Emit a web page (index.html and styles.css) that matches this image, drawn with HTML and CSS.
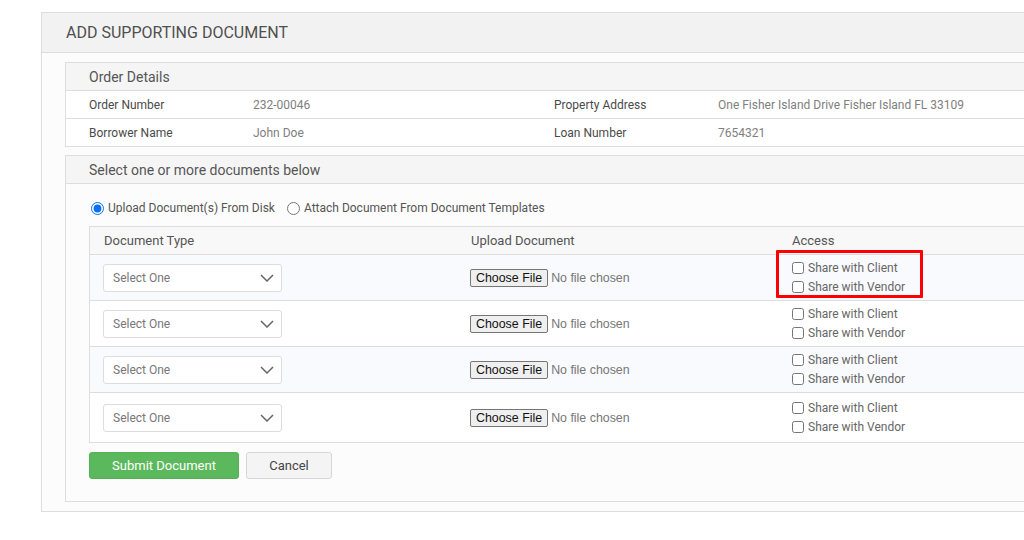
FILE: index.html
```html
<!DOCTYPE html>
<html lang="en">
<head>
  <meta charset="UTF-8" />
  <meta name="viewport" content="width=device-width, initial-scale=1.0"/>
  <title>Add Supporting Document</title>
  <link rel="stylesheet" href="styles.css">
</head>
<body>

  <div class="panel">
    <div class="panel-head">ADD SUPPORTING DOCUMENT</div>

    <div class="panel-body">
      <!-- Order Details -->
      <div class="box">
        <div class="box-head">Order Details</div>
        <div class="detail-row">
          <span class="label">Order Number</span>
          <span class="value">232-00046</span>
          <span class="label">Property Address</span>
          <span class="value">One Fisher Island Drive Fisher Island FL 33109</span>
        </div>
        <div class="detail-row">
          <span class="label">Borrower Name</span>
          <span class="value">John Doe</span>
          <span class="label">Loan Number</span>
          <span class="value">7654321</span>
        </div>
      </div>

      <!-- Documents -->
      <div class="box">
        <div class="box-head">Select one or more documents below</div>
        <div class="box-content">
          <div class="source">
            <label><input type="radio" name="source" checked> Upload Document(s) From Disk</label>
            <label><input type="radio" name="source"> Attach Document From Document Templates</label>
          </div>

          <div class="doc-table">
            <div class="doc-row doc-head">
              <div class="cell">Document Type</div>
              <div class="cell">Upload Document</div>
              <div class="cell">Access</div>
            </div>

            <div class="doc-row">
              <div class="cell"><select class="doc-select"><option>Select One</option></select></div>
              <div class="cell"><input type="file" class="file"></div>
              <div class="cell access">
                <label><input type="checkbox"> Share with Client</label>
                <label><input type="checkbox"> Share with Vendor</label>
                <div class="highlight"></div>
              </div>
            </div>

            <div class="doc-row">
              <div class="cell"><select class="doc-select"><option>Select One</option></select></div>
              <div class="cell"><input type="file" class="file"></div>
              <div class="cell access">
                <label><input type="checkbox"> Share with Client</label>
                <label><input type="checkbox"> Share with Vendor</label>
              </div>
            </div>

            <div class="doc-row">
              <div class="cell"><select class="doc-select"><option>Select One</option></select></div>
              <div class="cell"><input type="file" class="file"></div>
              <div class="cell access">
                <label><input type="checkbox"> Share with Client</label>
                <label><input type="checkbox"> Share with Vendor</label>
              </div>
            </div>

            <div class="doc-row last">
              <div class="cell"><select class="doc-select"><option>Select One</option></select></div>
              <div class="cell"><input type="file" class="file"></div>
              <div class="cell access">
                <label><input type="checkbox"> Share with Client</label>
                <label><input type="checkbox"> Share with Vendor</label>
              </div>
            </div>
          </div>

          <div class="actions">
            <button class="btn btn-submit">Submit Document</button>
            <button class="btn btn-cancel">Cancel</button>
          </div>
        </div>
      </div>
    </div>
  </div>

</body>
</html>
```

FILE: styles.css
```css
body {
  font-family: Roboto, "Liberation Sans", Arial, sans-serif;
  background: #fff;
  margin: 0;
  padding: 12px 0 0 41px;
  overflow: hidden;
  color: #555;
}

.panel {
  width: 1100px;
  border: 1px solid #ddd;
  background: #fcfcfc;
}

.panel-head {
  height: 39px;
  line-height: 39px;
  padding-left: 24px;
  background: #f2f2f2;
  border-bottom: 1px solid #ddd;
  font-size: 16px;
  color: #4f4f4f;
}

.panel-body {
  padding: 9px 24px 9px 23px;
  display: flex;
  flex-direction: column;
  gap: 8px;
}

.box {
  border: 1px solid #ddd;
  background: #fcfcfc;
}

.box-head {
  height: 27px;
  line-height: 28px;
  padding-left: 23px;
  background: #f5f5f5;
  border-bottom: 1px solid #ddd;
  font-size: 14px;
  color: #555;
}

.detail-row {
  display: grid;
  grid-template-columns: 164px 301px 164px 1fr;
  height: 27px;
  align-items: center;
  padding-left: 23px;
  font-size: 12px;
  background: #fff;
}

.detail-row + .detail-row {
  border-top: 1px solid #ddd;
}

.label {
  color: #4a4a4a;
}

.value {
  color: #808080;
}

.box-content {
  padding: 0 0 22px 23px;
}

.source {
  display: flex;
  gap: 10px;
  height: 36px;
  padding-top: 6px;
  align-items: center;
  font-size: 12px;
  color: #555;
}

.source label {
  display: flex;
  align-items: center;
  gap: 4px;
}

.source input {
  margin: 0 0 0 2px;
  width: 13px;
  height: 13px;
  accent-color: #0b6ff2;
}

.doc-table {
  border: 1px solid #ddd;
  background: #fff;
}

.doc-row {
  display: grid;
  grid-template-columns: 367px 321px 1fr;
  height: 45px;
  border-top: 1px solid #ddd;
  font-size: 12px;
}

.doc-row:nth-child(even) {
  background: #f9fafd;
}

.doc-row.last {
  height: 49px;
}

.doc-row.doc-head {
  height: 27px;
  border-top: none;
  background: #f8f8f8;
  font-size: 13px;
  color: #555;
}

.cell {
  display: flex;
  align-items: center;
  padding-left: 13px;
  position: relative;
}

.doc-head .cell {
  padding-left: 14px;
}

.doc-select {
  appearance: none;
  width: 179px;
  height: 28px;
  padding: 0 0 0 9px;
  border: 1px solid #ddd;
  border-radius: 3px;
  font-family: Roboto, sans-serif;
  font-size: 12px;
  color: #777;
  background: #fff url("data:image/svg+xml,%3Csvg xmlns='http://www.w3.org/2000/svg' width='14' height='8' viewBox='0 0 14 8'%3E%3Cpath d='M1 1l6 6 6-6' fill='none' stroke='%23666' stroke-width='1.5'/%3E%3C/svg%3E") no-repeat right 7px center;
}

.file {
  font-family: "Liberation Sans", Arial, sans-serif;
  font-size: 12.4px;
  color: #777;
  margin-left: 0;
}

.file::file-selector-button {
  font-family: "Liberation Sans", Arial, sans-serif;
  font-size: 12.4px;
  color: #111;
  background: #efefef;
  border: 1px solid #767676;
  border-radius: 2px;
  padding: 1px 5px;
  margin-right: 3px;
}

.access {
  flex-direction: column;
  align-items: flex-start;
  justify-content: center;
  gap: 5px;
  padding-left: 14px;
  color: #666;
}

.access label {
  display: flex;
  align-items: center;
  gap: 4px;
}

.access input {
  margin: 0;
  width: 12px;
  height: 12px;
}

.highlight {
  position: absolute;
  left: -2px;
  top: -5px;
  width: 147px;
  height: 48px;
  border: 3px solid #f00;
  box-sizing: border-box;
  border-radius: 1px;
}

.actions {
  display: flex;
  gap: 7px;
  margin-top: 9px;
}

.btn {
  height: 27px;
  border-radius: 3px;
  font-family: Roboto, sans-serif;
  font-size: 13px;
  cursor: pointer;
}

.btn-submit {
  width: 150px;
  background: #5cb85c;
  border: 1px solid #53b153;
  color: #fff;
}

.btn-cancel {
  width: 86px;
  background: #f4f4f4;
  border: 1px solid #d6d6d6;
  color: #444;
}
```
